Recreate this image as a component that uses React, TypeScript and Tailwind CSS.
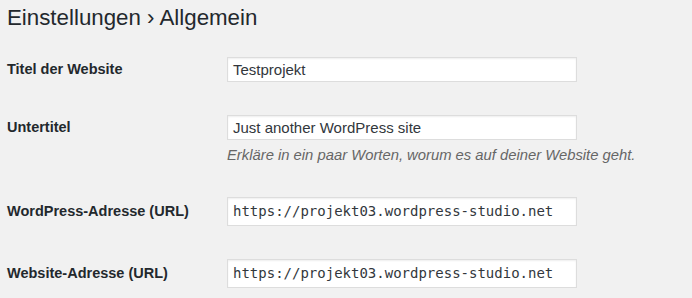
import React from "react";

const rows = [
  { label: "Titel der Website", value: "Testprojekt", mono: false },
  {
    label: "Untertitel",
    value: "Just another WordPress site",
    mono: false,
    hint: "Erkläre in ein paar Worten, worum es auf deiner Website geht.",
  },
  { label: "WordPress-Adresse (URL)", value: "https://projekt03.wordpress-studio.net", mono: true },
  { label: "Website-Adresse (URL)", value: "https://projekt03.wordpress-studio.net", mono: true },
];

function Field({ value, mono }: { value: string; mono: boolean }) {
  return (
    <div
      className={
        "w-[350px] bg-white border border-[#dddddd] shadow-[inset_0_1px_2px_rgba(0,0,0,0.07)] px-[5px] text-[#32373c] " +
        (mono
          ? "h-[29px] leading-[27px] text-[14px] font-['DejaVu_Sans_Mono',monospace]"
          : "h-[25px] leading-[23px] text-[15px]")
      }
    >
      {value}
    </div>
  );
}

export default function App() {
  return (
    <div className="w-[692px] h-[298px] bg-[#f1f1f1] text-[#23282d] font-['Liberation_Sans',Arial,sans-serif] overflow-hidden">
      <h1 className="pl-[7px] pt-[3px] text-[22.3px] leading-[29px] font-normal">
        Einstellungen › Allgemein
      </h1>
      <div className="mt-[25px]">
        <div className="flex items-center">
          <div className="w-[227px] pl-[7px] text-[14.5px] font-bold">{rows[0].label}</div>
          <Field value={rows[0].value} mono={false} />
        </div>
        <div className="flex mt-[33px]">
          <div className="w-[227px] pl-[7px] text-[14.5px] font-bold leading-[25px]">{rows[1].label}</div>
          <div>
            <Field value={rows[1].value} mono={false} />
            <p className="mt-[7px] text-[14.8px] italic text-[#666666] leading-[17px]">{rows[1].hint}</p>
          </div>
        </div>
        <div className="flex items-center mt-[33px]">
          <div className="w-[227px] pl-[7px] text-[14.5px] font-bold">{rows[2].label}</div>
          <Field value={rows[2].value} mono />
        </div>
        <div className="flex items-center mt-[33px]">
          <div className="w-[227px] pl-[7px] text-[14.5px] font-bold">{rows[3].label}</div>
          <Field value={rows[3].value} mono />
        </div>
      </div>
    </div>
  );
}
